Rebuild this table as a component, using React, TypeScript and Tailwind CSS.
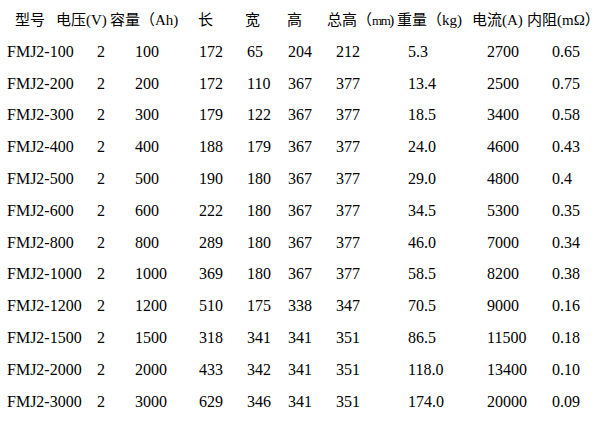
import React from 'react';

const rows = [
  ['FMJ2-100', '2', '100', '172', '65', '204', '212', '5.3', '2700', '0.65'],
  ['FMJ2-200', '2', '200', '172', '110', '367', '377', '13.4', '2500', '0.75'],
  ['FMJ2-300', '2', '300', '179', '122', '367', '377', '18.5', '3400', '0.58'],
  ['FMJ2-400', '2', '400', '188', '179', '367', '377', '24.0', '4600', '0.43'],
  ['FMJ2-500', '2', '500', '190', '180', '367', '377', '29.0', '4800', '0.4'],
  ['FMJ2-600', '2', '600', '222', '180', '367', '377', '34.5', '5300', '0.35'],
  ['FMJ2-800', '2', '800', '289', '180', '367', '377', '46.0', '7000', '0.34'],
  ['FMJ2-1000', '2', '1000', '369', '180', '367', '377', '58.5', '8200', '0.38'],
  ['FMJ2-1200', '2', '1200', '510', '175', '338', '347', '70.5', '9000', '0.16'],
  ['FMJ2-1500', '2', '1500', '318', '341', '341', '351', '86.5', '11500', '0.18'],
  ['FMJ2-2000', '2', '2000', '433', '342', '341', '351', '118.0', '13400', '0.10'],
  ['FMJ2-3000', '2', '3000', '629', '346', '341', '351', '174.0', '20000', '0.09'],
];

export default function App() {
  return (
    <div className="w-[615px] h-[435px] bg-white text-black overflow-hidden pt-[4px] font-['Liberation_Serif','Noto_Sans_CJK_SC',serif] text-[16px]">
      {/* Header - labels sit at their own offsets, not on the data columns */}
      <div className="flex items-center h-[32px] pl-[15px] whitespace-nowrap text-[15px]">
        <span className="w-[41px] shrink-0">型号</span>
        <span className="w-[54px] shrink-0">电压(V)</span>
        <span className="w-[88px] shrink-0">容量（Ah)</span>
        <span className="w-[47px] shrink-0">长</span>
        <span className="w-[42px] shrink-0">宽</span>
        <span className="w-[40px] shrink-0">高</span>
        <span className="w-[70px] shrink-0">
          总高（<span className="text-[13px] tracking-[-1.5px]">mm</span>)
        </span>
        <span className="w-[75px] shrink-0">重量（kg)</span>
        <span className="w-[55px] shrink-0">电流(A)</span>
        <span className="shrink-0">内阻(mΩ）</span>
      </div>

      {/* Data rows */}
      {rows.map((r) => (
        <div
          key={r[0]}
          className="grid grid-cols-[90px_38px_64px_48px_41px_48px_72px_79px_65px_1fr] items-center h-[31.8px] pl-[7px] whitespace-nowrap"
        >
          {r.map((cell, i) => (
            <span key={i}>{cell}</span>
          ))}
        </div>
      ))}
    </div>
  );
}
